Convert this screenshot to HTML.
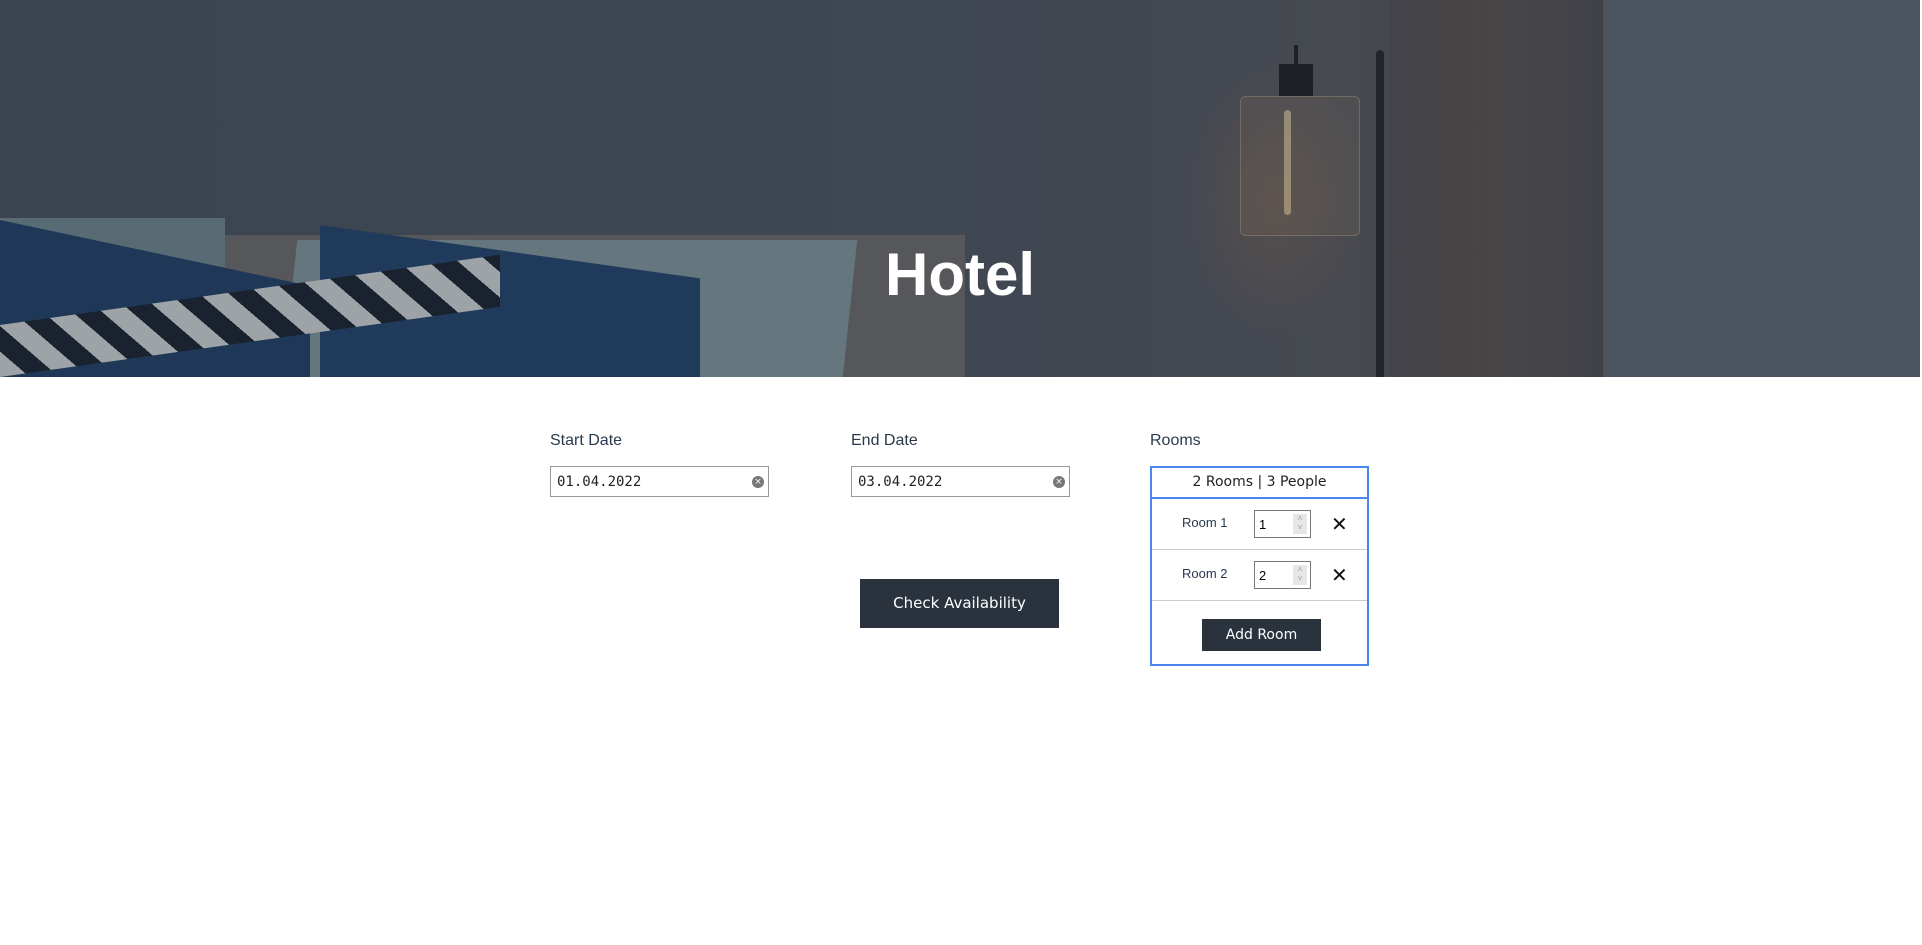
<!DOCTYPE html>
<html><head><meta charset="utf-8"><style>
*{margin:0;padding:0;box-sizing:border-box}
body{width:1922px;height:945px;background:#fff;font-family:"Liberation Sans",sans-serif;position:relative;overflow:hidden}
.hero{position:absolute;left:0;top:0;width:1920px;height:377px;background:linear-gradient(90deg,#3b4450 0%,#3f4753 50%,#464950 70%,#48464a 78%,#3c3f46 86%,#3c3f46 100%);overflow:hidden}
.abs{position:absolute}
h1{position:absolute;left:0;width:1920px;top:238px;text-align:center;color:#fff;font-size:60px;font-weight:bold;line-height:74px}
.lbl{position:absolute;font-size:16px;color:#2a3a4e}
.inp{position:absolute;height:31px;width:219px;border:1px solid #999;font-family:"DejaVu Sans Mono","Liberation Mono",monospace;font-size:14px;padding:7px 6px;color:#222}
.clr{position:absolute;right:4px;top:9px;width:12px;height:12px;border-radius:50%;background:#777;color:#fff;font-size:9px;line-height:12px;text-align:center;font-family:"DejaVu Sans"}
.btn{position:absolute;background:#29323d;color:#fff;text-align:center;font-family:"DejaVu Sans",sans-serif}
.box{position:absolute;left:1150px;top:466px;width:219px;height:200px;border:2px solid #4a86f0}
.row{position:absolute;left:0;width:215px;border-bottom:1px solid #ccc}
.rl{position:absolute;left:30px;font-size:13px;color:#2a3a4e}
.num{position:absolute;left:102px;width:57px;height:28px;border:1px solid #777;font-size:13px;padding:6px 4px}
.sp{position:absolute;right:3px;top:3px;width:14px;height:20px;background:#e6e6e9;color:#999;font-size:8px;line-height:9px;text-align:center}
.x{position:absolute;left:179px;font-size:20px;font-family:"DejaVu Sans",sans-serif;color:#111}
</style></head><body>
<div class="hero">
 <div class="abs" style="left:1603px;top:0;width:317px;height:377px;background:#4b535e"></div>
 <div class="abs" style="left:1390px;top:0;width:110px;height:377px;background:linear-gradient(90deg,rgba(0,0,0,0.05),rgba(80,60,50,0.25))"></div>
 <div class="abs" style="left:1180px;top:60px;width:190px;height:280px;background:radial-gradient(ellipse at center,rgba(130,95,70,0.3),rgba(0,0,0,0) 70%)"></div>
 <div class="abs" style="left:1376px;top:50px;width:8px;height:327px;background:#22252b;border-radius:6px 6px 0 0"></div>
 <div class="abs" style="left:1294px;top:45px;width:4px;height:20px;background:#1d2026"></div>
 <div class="abs" style="left:1279px;top:64px;width:34px;height:32px;background:#1d2026"></div>
 <div class="abs" style="left:1240px;top:96px;width:120px;height:140px;border:1px solid rgba(200,170,140,0.3);border-radius:6px;background:rgba(150,120,95,0.12)"></div>
 <div class="abs" style="left:1284px;top:110px;width:7px;height:105px;background:rgba(230,210,160,0.45);border-radius:4px"></div>
 <div class="abs" style="left:220px;top:235px;width:745px;height:142px;background:#55575a"></div>
 <div class="abs" style="left:0;top:218px;width:225px;height:159px;background:#586a74"></div>
 <div class="abs" style="left:290px;top:240px;width:560px;height:137px;background:#66767f;transform:skewX(-6deg)"></div>
 <div class="abs" style="left:0;top:220px;width:310px;height:157px;background:#1f3858;transform:skewY(12deg);transform-origin:0 0"></div>
 <div class="abs" style="left:320px;top:225px;width:380px;height:152px;background:#203a5b;transform:skewY(8deg);transform-origin:0 0"></div>
 <div class="abs" style="left:0;top:325px;width:500px;height:52px;background:repeating-linear-gradient(45deg,#9ea3a8 0 18px,#1a2230 18px 36px);transform:skewY(-8deg);transform-origin:0 100%"></div>
</div>
<h1>Hotel</h1>
<div class="lbl" style="left:550px;top:432px">Start Date</div>
<div class="lbl" style="left:851px;top:432px">End Date</div>
<div class="lbl" style="left:1150px;top:432px">Rooms</div>
<div class="inp" style="left:550px;top:466px">01.04.2022<span class="clr">×</span></div>
<div class="inp" style="left:851px;top:466px">03.04.2022<span class="clr">×</span></div>
<div class="btn" style="left:860px;top:579px;width:199px;height:49px;font-size:15px;line-height:49px">Check Availability</div>
<div class="box">
 <div class="row" style="top:0;height:31px;border-bottom:2px solid #4a86f0;text-align:center;font-family:'DejaVu Sans',sans-serif;font-size:14px;line-height:29px;color:#222">2 Rooms | 3 People</div>
 <div class="row" style="top:31px;height:51px"><span class="rl" style="top:16px">Room 1</span><div class="num" style="top:11px">1<span class="sp">˄<br>˅</span></div><span class="x" style="top:13px">✕</span></div>
 <div class="row" style="top:82px;height:51px"><span class="rl" style="top:16px">Room 2</span><div class="num" style="top:11px">2<span class="sp">˄<br>˅</span></div><span class="x" style="top:13px">✕</span></div>
 <div class="btn" style="left:50px;top:151px;width:119px;height:32px;font-size:14px;line-height:32px">Add Room</div>
</div>
</body></html>
